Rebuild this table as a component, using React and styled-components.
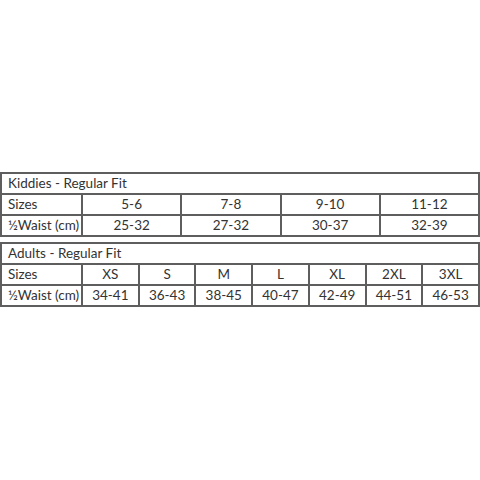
import React from 'react';
import styled, { createGlobalStyle } from 'styled-components';

const GlobalStyle = createGlobalStyle`
  html, body {
    margin: 0;
    padding: 0;
    background: #fff;
  }
  body {
    font-family: Lato, "Open Sans", sans-serif;
    color: #333;
  }
`;

const Page = styled.div`
  width: 480px;
  height: 480px;
  display: flex;
  flex-direction: column;
  gap: 5px;
  padding-top: 172px;
  box-sizing: border-box;
  overflow: hidden;
`;

const Table = styled.table`
  width: 480px;
  border-collapse: collapse;
  table-layout: fixed;
  font-size: 13.5px;
  line-height: 1;
`;

const Cell = styled.td`
  border: 2px solid #5e5e5e;
  height: 19px;
  padding: 0 6px;
  text-align: ${(p) => (p.$left ? 'left' : 'center')};
  vertical-align: middle;
  white-space: nowrap;
  color: #333;
`;

const kiddies = {
  title: 'Kiddies - Regular Fit',
  firstWidth: 81,
  sizes: ['5-6', '7-8', '9-10', '11-12'],
  waist: ['25-32', '27-32', '30-37', '32-39'],
};

const adults = {
  title: 'Adults - Regular Fit',
  firstWidth: 81,
  sizes: ['XS', 'S', 'M', 'L', 'XL', '2XL', '3XL'],
  waist: ['34-41', '36-43', '38-45', '40-47', '42-49', '44-51', '46-53'],
};

function SizeTable({ data }) {
  const cols = data.sizes.length;
  return (
    <Table>
      <colgroup>
        <col style={{ width: data.firstWidth }} />
        {data.sizes.map((s) => (
          <col key={s} />
        ))}
      </colgroup>
      <tbody>
        <tr>
          <Cell $left colSpan={cols + 1}>
            {data.title}
          </Cell>
        </tr>
        <tr>
          <Cell $left>Sizes</Cell>
          {data.sizes.map((s) => (
            <Cell key={s}>{s}</Cell>
          ))}
        </tr>
        <tr>
          <Cell $left>½Waist (cm)</Cell>
          {data.waist.map((w, i) => (
            <Cell key={i}>{w}</Cell>
          ))}
        </tr>
      </tbody>
    </Table>
  );
}

export default function App() {
  return (
    <>
      <GlobalStyle />
      <Page>
        <SizeTable data={kiddies} />
        <SizeTable data={adults} />
      </Page>
    </>
  );
}
